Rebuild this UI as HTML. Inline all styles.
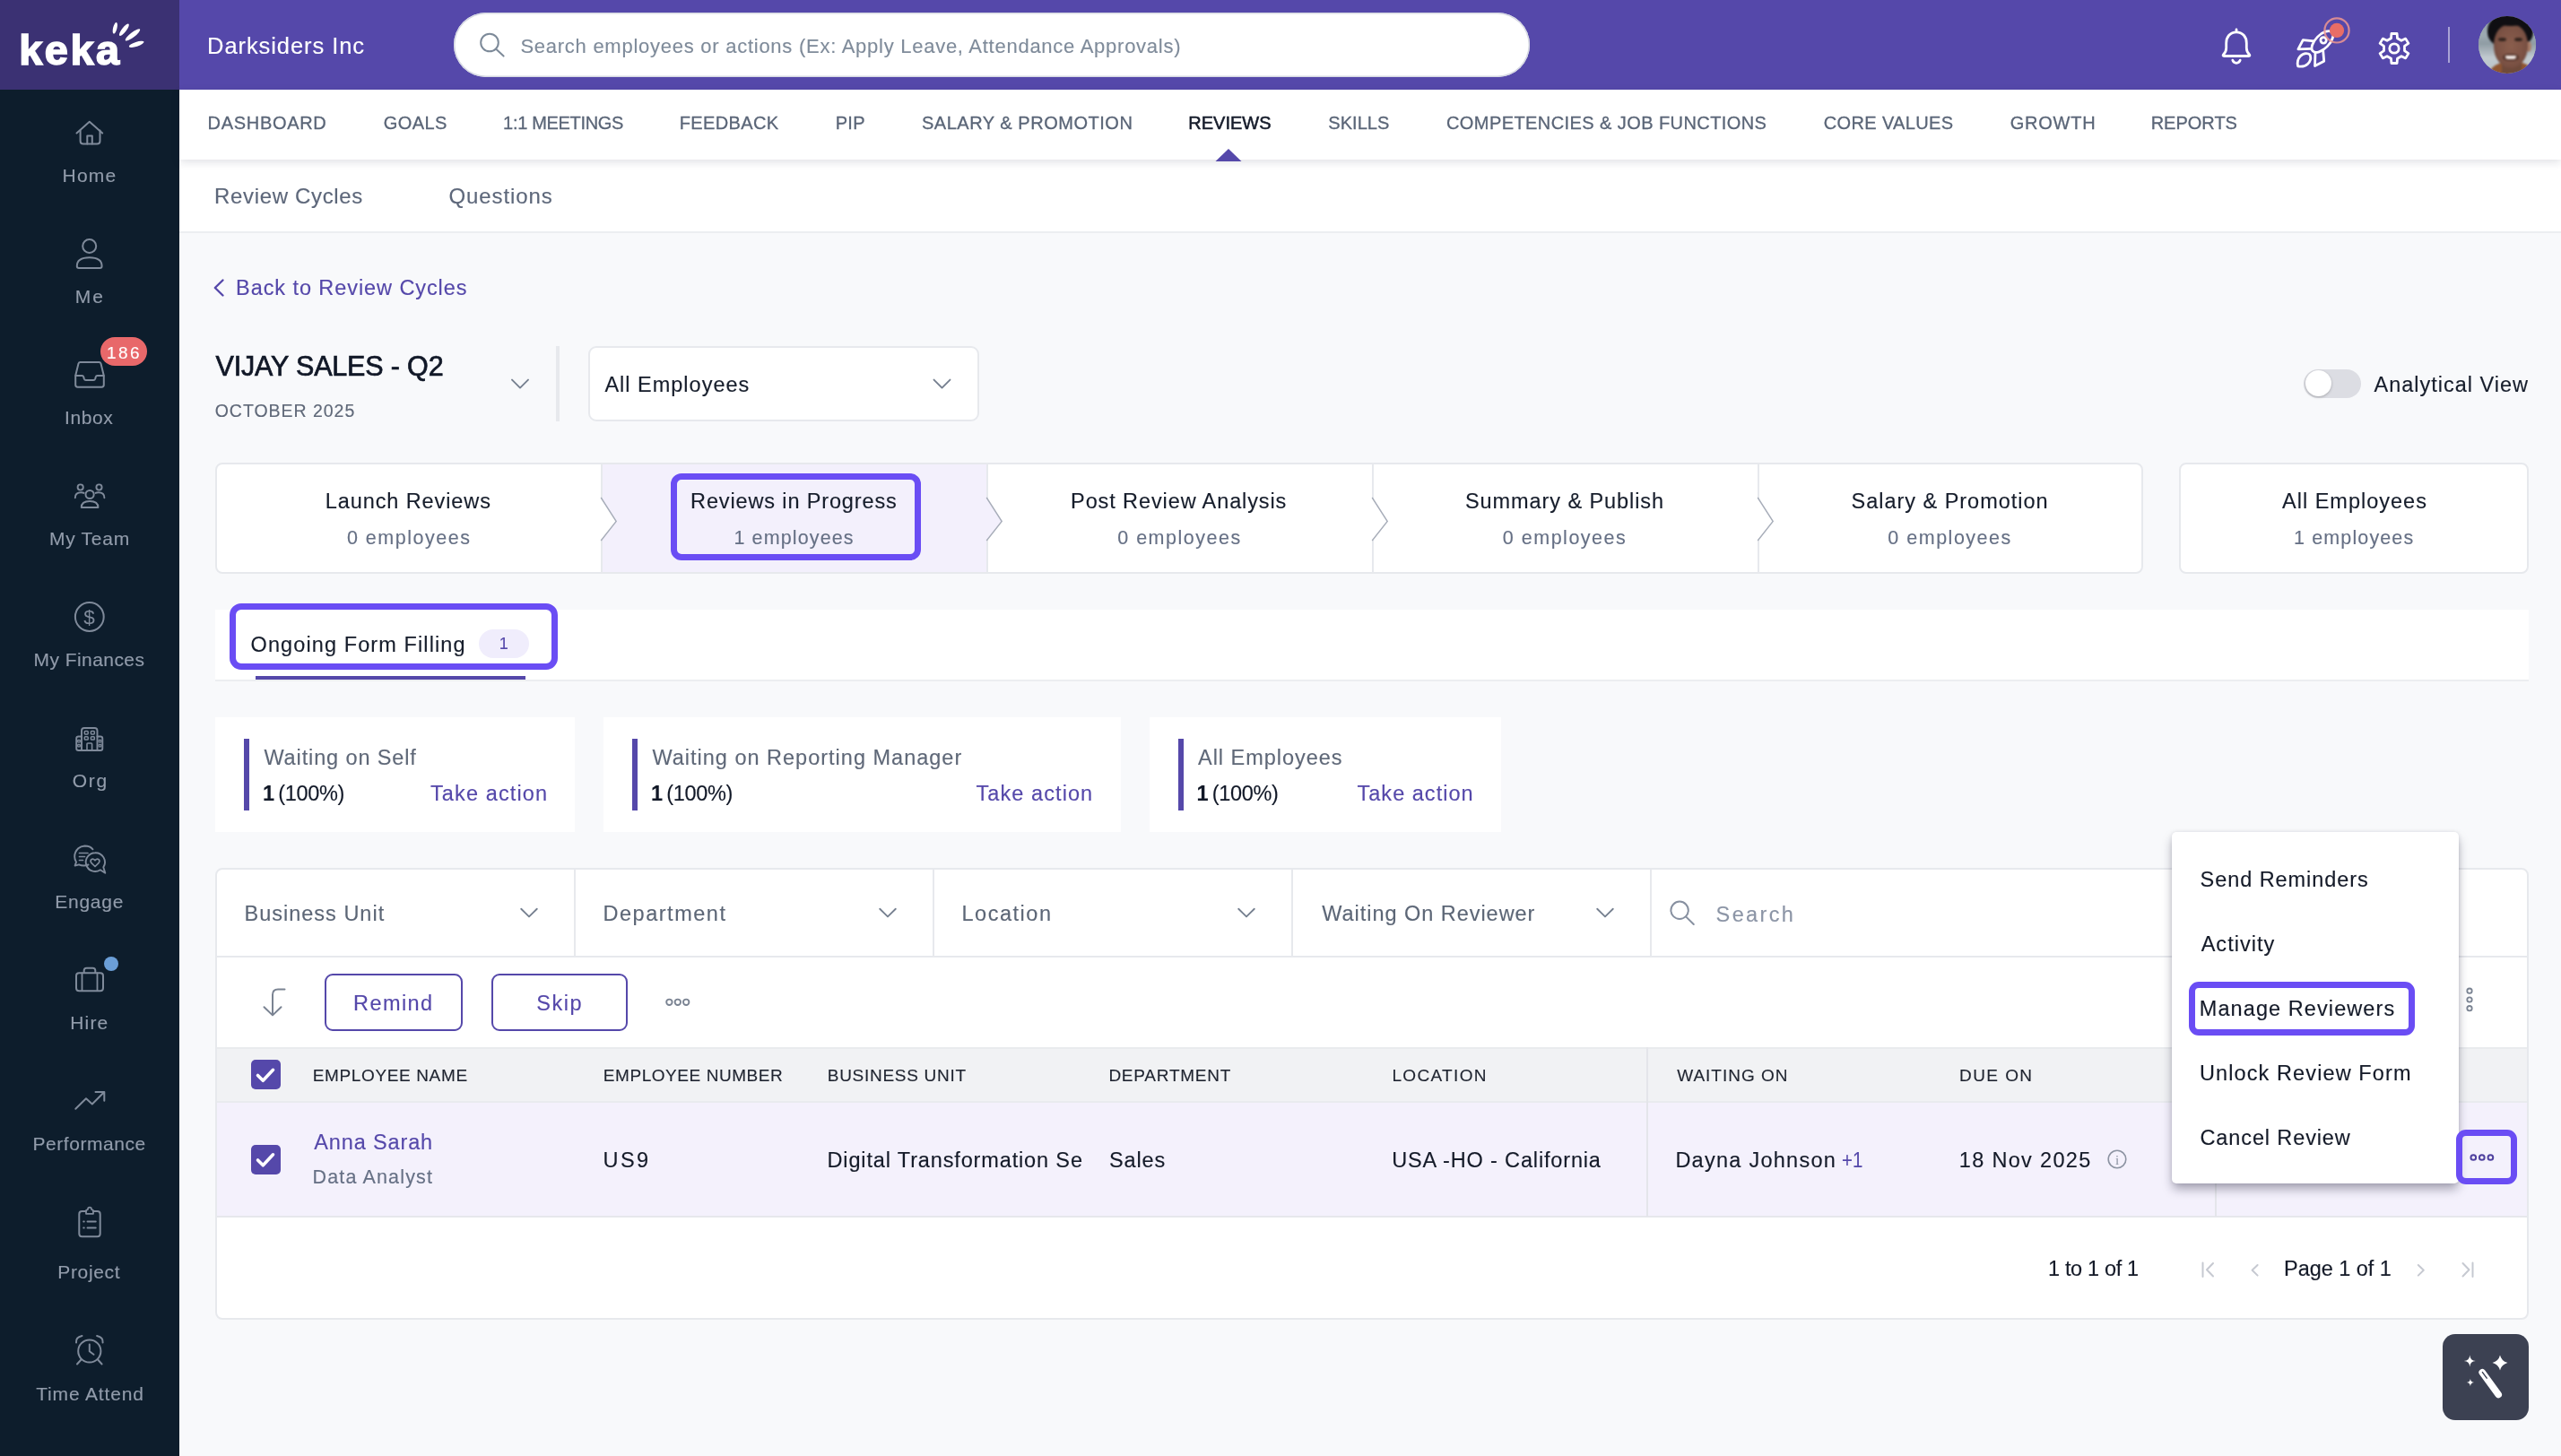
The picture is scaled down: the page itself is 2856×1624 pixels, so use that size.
<!DOCTYPE html>
<html lang="en"><head><meta charset="utf-8"><title>Keka - Reviews</title>
<style>
*{margin:0;padding:0}
html,body{width:100%;height:100%;min-width:100%;overflow:hidden;background:#f8f9fb}
body{position:relative;font-family:"Liberation Sans",sans-serif;-webkit-font-smoothing:antialiased}
#p{position:absolute;left:0;top:0;width:2856px;height:1624px;overflow:hidden;will-change:transform;transform-origin:0 0;background:#f8f9fb}
#p div,#p span{position:absolute;display:block}
#p span{white-space:nowrap;-webkit-text-stroke:.14px}
#ic{position:absolute;left:0;top:0;z-index:10;pointer-events:none}
</style></head>
<body>
<div id="p">
<div style="left:200px;top:0px;width:2656px;height:100px;background:#5548aa;"></div>
<div style="left:0px;top:0px;width:200px;height:100px;background:#3b3173;"></div>
<div style="left:0px;top:100px;width:200px;height:1524px;background:#0d1d2c;"></div>
<div style="left:200px;top:100px;width:2656px;height:78px;background:#fff;box-shadow:0 3px 9px rgba(20,30,60,.13);z-index:2;"></div>
<div style="left:200px;top:178px;width:2656px;height:80px;background:#fff;border-bottom:2px solid #eceef1;"></div>
<span style="left:21.3px;top:29px;font-size:47px;line-height:53px;color:#fff;letter-spacing:2.41px;font-weight:700;-webkit-text-stroke:1.6px #fff;z-index:3;">keka</span>
<span style="left:231.1px;top:37px;font-size:25.5px;line-height:28px;color:#fff;letter-spacing:0.92px;">Darksiders Inc</span>
<div style="left:506px;top:14px;width:1200px;height:72px;background:#fff;border-radius:36px;box-shadow:inset 0 0 0 1.5px #d5d8e2;"></div>
<span style="left:580.4px;top:39px;font-size:22px;line-height:25px;color:#7f8b9a;letter-spacing:0.74px;">Search employees or actions (Ex: Apply Leave, Attendance Approvals)</span>
<span style="left:231.6px;top:126px;font-size:20px;line-height:22px;color:#5a6577;letter-spacing:0.69px;z-index:3;-webkit-text-stroke:.3px #5a6577;">DASHBOARD</span>
<span style="left:427.8px;top:126px;font-size:20px;line-height:22px;color:#5a6577;letter-spacing:0.43px;z-index:3;-webkit-text-stroke:.3px #5a6577;">GOALS</span>
<span style="left:561.1px;top:126px;font-size:20px;line-height:22px;color:#5a6577;letter-spacing:-0.32px;z-index:3;-webkit-text-stroke:.3px #5a6577;">1:1 MEETINGS</span>
<span style="left:757.8px;top:126px;font-size:20px;line-height:22px;color:#5a6577;letter-spacing:0.35px;z-index:3;-webkit-text-stroke:.3px #5a6577;">FEEDBACK</span>
<span style="left:931.8px;top:126px;font-size:20px;line-height:22px;color:#5a6577;letter-spacing:0.23px;z-index:3;-webkit-text-stroke:.3px #5a6577;">PIP</span>
<span style="left:1027.9px;top:126px;font-size:20px;line-height:22px;color:#5a6577;letter-spacing:0.53px;z-index:3;-webkit-text-stroke:.3px #5a6577;">SALARY &amp; PROMOTION</span>
<span style="left:1325.3px;top:126px;font-size:20px;line-height:22px;color:#161c2b;z-index:3;-webkit-text-stroke:.55px #161c2b;">REVIEWS</span>
<span style="left:1481.3px;top:126px;font-size:20px;line-height:22px;color:#5a6577;letter-spacing:0.04px;z-index:3;-webkit-text-stroke:.3px #5a6577;">SKILLS</span>
<span style="left:1613px;top:126px;font-size:20px;line-height:22px;color:#5a6577;letter-spacing:0.42px;z-index:3;-webkit-text-stroke:.3px #5a6577;">COMPETENCIES &amp; JOB FUNCTIONS</span>
<span style="left:2033.7px;top:126px;font-size:20px;line-height:22px;color:#5a6577;letter-spacing:0.37px;z-index:3;-webkit-text-stroke:.3px #5a6577;">CORE VALUES</span>
<span style="left:2241.8px;top:126px;font-size:20px;line-height:22px;color:#5a6577;letter-spacing:0.75px;z-index:3;-webkit-text-stroke:.3px #5a6577;">GROWTH</span>
<span style="left:2398.7px;top:126px;font-size:20px;line-height:22px;color:#5a6577;letter-spacing:-0.01px;z-index:3;-webkit-text-stroke:.3px #5a6577;">REPORTS</span>
<span style="left:239px;top:205px;font-size:24px;line-height:27px;color:#5d677a;letter-spacing:0.66px;">Review Cycles</span>
<span style="left:500.5px;top:205px;font-size:24px;line-height:27px;color:#5d677a;letter-spacing:0.91px;">Questions</span>
<span style="left:69.5px;top:184px;font-size:21px;line-height:23px;color:#929cab;letter-spacing:1.21px;">Home</span>
<span style="left:83.7px;top:319px;font-size:21px;line-height:23px;color:#929cab;letter-spacing:2.08px;">Me</span>
<span style="left:72px;top:454px;font-size:21px;line-height:23px;color:#929cab;letter-spacing:0.6px;">Inbox</span>
<span style="left:55px;top:589px;font-size:21px;line-height:23px;color:#929cab;letter-spacing:0.72px;">My Team</span>
<span style="left:37.5px;top:724px;font-size:21px;line-height:23px;color:#929cab;letter-spacing:0.44px;">My Finances</span>
<span style="left:80.7px;top:859px;font-size:21px;line-height:23px;color:#929cab;letter-spacing:1.72px;">Org</span>
<span style="left:61.2px;top:994px;font-size:21px;line-height:23px;color:#929cab;letter-spacing:0.77px;">Engage</span>
<span style="left:78.3px;top:1129px;font-size:21px;line-height:23px;color:#929cab;letter-spacing:1.15px;">Hire</span>
<span style="left:36.5px;top:1264px;font-size:21px;line-height:23px;color:#929cab;letter-spacing:0.54px;">Performance</span>
<span style="left:64.3px;top:1407px;font-size:21px;line-height:23px;color:#929cab;letter-spacing:0.65px;">Project</span>
<span style="left:40.2px;top:1543px;font-size:21px;line-height:23px;color:#929cab;letter-spacing:0.85px;">Time Attend</span>
<div style="left:111.8px;top:376px;width:52.2px;height:32px;background:#e8686a;border-radius:16px;"></div>
<span style="left:119px;top:383px;font-size:19px;line-height:21px;color:#fff;letter-spacing:2.49px;">186</span>
<div style="left:116px;top:1066.6px;width:16px;height:16px;background:#6b9fd8;border-radius:50%;"></div>
<span style="left:263.1px;top:308px;font-size:23.5px;line-height:26px;color:#5548aa;letter-spacing:0.92px;">Back to Review Cycles</span>
<span style="left:240.5px;top:391px;font-size:30.5px;line-height:34px;color:#111827;letter-spacing:-0.16px;-webkit-text-stroke:.7px #111827;">VIJAY SALES - Q2</span>
<span style="left:239.7px;top:447px;font-size:19.5px;line-height:22px;color:#5f6878;letter-spacing:0.97px;">OCTOBER 2025</span>
<div style="left:620px;top:386px;width:4px;height:84px;background:#e7e9ed;"></div>
<div style="left:656px;top:386px;width:436px;height:84px;background:#fff;border:2px solid #e7e9ed;border-radius:9px;box-sizing:border-box;"></div>
<span style="left:674.4px;top:416px;font-size:23.5px;line-height:26px;color:#161d2b;letter-spacing:1px;">All Employees</span>
<div style="left:2569px;top:412px;width:64px;height:32px;background:#dcdde3;border-radius:17px;"></div>
<div style="left:2570.5px;top:413.3px;width:29px;height:29px;background:#fff;border-radius:50%;box-shadow:0 1px 3px rgba(0,0,0,.25);"></div>
<span style="left:2647.6px;top:416px;font-size:23.5px;line-height:26px;color:#161d2b;letter-spacing:0.98px;">Analytical View</span>
<div style="left:240px;top:516px;width:2150px;height:124px;background:#fff;border:2px solid #e7e9ed;border-radius:8px;box-sizing:border-box;"></div>
<div style="left:672px;top:518px;width:430px;height:120px;background:#f3f0fc;"></div>
<div style="left:670px;top:518px;width:2px;height:120px;background:#e7e9ed;"></div>
<div style="left:1100px;top:518px;width:2px;height:120px;background:#e7e9ed;"></div>
<div style="left:1530px;top:518px;width:2px;height:120px;background:#e7e9ed;"></div>
<div style="left:1960px;top:518px;width:2px;height:120px;background:#e7e9ed;"></div>
<div style="left:2430px;top:516px;width:390px;height:124px;background:#fff;border:2px solid #e7e9ed;border-radius:8px;box-sizing:border-box;"></div>
<span style="left:362.8px;top:546px;font-size:23.5px;line-height:26px;color:#161d2b;letter-spacing:0.9px;">Launch Reviews</span>
<span style="left:386.9px;top:588px;font-size:21.5px;line-height:24px;color:#667085;letter-spacing:1.51px;">0 employees</span>
<span style="left:770.1px;top:546px;font-size:23.5px;line-height:26px;color:#161d2b;letter-spacing:0.86px;">Reviews in Progress</span>
<span style="left:818.4px;top:588px;font-size:21.5px;line-height:24px;color:#667085;letter-spacing:1.13px;">1 employees</span>
<span style="left:1194.1px;top:546px;font-size:23.5px;line-height:26px;color:#161d2b;letter-spacing:0.89px;">Post Review Analysis</span>
<span style="left:1246.2px;top:588px;font-size:21.5px;line-height:24px;color:#667085;letter-spacing:1.51px;">0 employees</span>
<span style="left:1634px;top:546px;font-size:23.5px;line-height:26px;color:#161d2b;letter-spacing:0.92px;">Summary &amp; Publish</span>
<span style="left:1675.8px;top:588px;font-size:21.5px;line-height:24px;color:#667085;letter-spacing:1.51px;">0 employees</span>
<span style="left:2064.5px;top:546px;font-size:23.5px;line-height:26px;color:#161d2b;letter-spacing:0.98px;">Salary &amp; Promotion</span>
<span style="left:2105.3px;top:588px;font-size:21.5px;line-height:24px;color:#667085;letter-spacing:1.51px;">0 employees</span>
<span style="left:2545px;top:546px;font-size:23.5px;line-height:26px;color:#161d2b;letter-spacing:1px;">All Employees</span>
<span style="left:2558px;top:588px;font-size:21.5px;line-height:24px;color:#667085;letter-spacing:1.13px;">1 employees</span>
<div style="left:747.8px;top:527.5px;width:279.7px;height:97.8px;border:7.5px solid #6a4df4;border-radius:12px;box-sizing:border-box;"></div>
<div style="left:240px;top:680px;width:2580px;height:78px;background:#fff;border-bottom:2px solid #eceef1;"></div>
<div style="left:285px;top:754px;width:301px;height:4px;background:#5548aa;"></div>
<div style="left:256px;top:673px;width:366px;height:73.6px;background:#fff;border:7.5px solid #6a4df4;border-radius:13px;box-sizing:border-box;"></div>
<span style="left:279.5px;top:706px;font-size:23.5px;line-height:26px;color:#161d2b;letter-spacing:1.1px;">Ongoing Form Filling</span>
<div style="left:533.75px;top:702px;width:56.25px;height:31.75px;background:#f0edfc;border-radius:16px;"></div>
<span style="left:556.7px;top:708px;font-size:18px;line-height:20px;color:#5548aa;">1</span>
<div style="left:240px;top:800px;width:401px;height:128px;background:#fff;"></div>
<div style="left:272px;top:824px;width:6px;height:80px;background:#5548aa;"></div>
<span style="left:294.4px;top:832px;font-size:23.5px;line-height:26px;color:#5f6878;letter-spacing:0.88px;">Waiting on Self</span>
<span style="left:293px;top:872px;font-size:23.5px;line-height:26px;color:#111827;font-weight:700;">1</span>
<span style="left:310.2px;top:872px;font-size:23.5px;line-height:26px;color:#111827;letter-spacing:-0.33px;">(100%)</span>
<span style="left:480px;top:872px;font-size:23.5px;line-height:26px;color:#5548aa;letter-spacing:1.12px;">Take action</span>
<div style="left:673px;top:800px;width:577px;height:128px;background:#fff;"></div>
<div style="left:705px;top:824px;width:6px;height:80px;background:#5548aa;"></div>
<span style="left:727.4px;top:832px;font-size:23.5px;line-height:26px;color:#5f6878;letter-spacing:1px;">Waiting on Reporting Manager</span>
<span style="left:726px;top:872px;font-size:23.5px;line-height:26px;color:#111827;font-weight:700;">1</span>
<span style="left:743.2px;top:872px;font-size:23.5px;line-height:26px;color:#111827;letter-spacing:-0.33px;">(100%)</span>
<span style="left:1088.5px;top:872px;font-size:23.5px;line-height:26px;color:#5548aa;letter-spacing:1.08px;">Take action</span>
<div style="left:1282px;top:800px;width:392px;height:128px;background:#fff;"></div>
<div style="left:1314px;top:824px;width:6px;height:80px;background:#5548aa;"></div>
<span style="left:1336px;top:832px;font-size:23.5px;line-height:26px;color:#5f6878;letter-spacing:0.97px;">All Employees</span>
<span style="left:1334.5px;top:872px;font-size:23.5px;line-height:26px;color:#111827;font-weight:700;">1</span>
<span style="left:1351.7px;top:872px;font-size:23.5px;line-height:26px;color:#111827;letter-spacing:-0.33px;">(100%)</span>
<span style="left:1513.5px;top:872px;font-size:23.5px;line-height:26px;color:#5548aa;letter-spacing:1.02px;">Take action</span>
<div style="left:240px;top:968px;width:2580px;height:504px;background:#fff;border:2px solid #e7e9ed;border-radius:8px;box-sizing:border-box;"></div>
<div style="left:242px;top:1066px;width:2576px;height:2px;background:#e7e9ed;"></div>
<div style="left:640px;top:970px;width:2px;height:96px;background:#e7e9ed;"></div>
<div style="left:1040px;top:970px;width:2px;height:96px;background:#e7e9ed;"></div>
<div style="left:1440px;top:970px;width:2px;height:96px;background:#e7e9ed;"></div>
<div style="left:1840px;top:970px;width:2px;height:96px;background:#e7e9ed;"></div>
<span style="left:272.5px;top:1006px;font-size:23.5px;line-height:26px;color:#5c6676;letter-spacing:1px;">Business Unit</span>
<span style="left:672.5px;top:1006px;font-size:23.5px;line-height:26px;color:#5c6676;letter-spacing:1.52px;">Department</span>
<span style="left:1072.5px;top:1006px;font-size:23.5px;line-height:26px;color:#5c6676;letter-spacing:1.52px;">Location</span>
<span style="left:1474.3px;top:1006px;font-size:23.5px;line-height:26px;color:#5c6676;letter-spacing:0.96px;">Waiting On Reviewer</span>
<span style="left:1913.6px;top:1007px;font-size:23.5px;line-height:26px;color:#8c95a6;letter-spacing:2.37px;">Search</span>
<div style="left:362px;top:1086px;width:154px;height:64px;border:2.5px solid #5548aa;border-radius:9px;box-sizing:border-box;background:#fff;"></div>
<div style="left:548px;top:1086px;width:152px;height:64px;border:2.5px solid #5548aa;border-radius:9px;box-sizing:border-box;background:#fff;"></div>
<span style="left:394.1px;top:1106px;font-size:23.5px;line-height:26px;color:#5548aa;letter-spacing:1.41px;">Remind</span>
<span style="left:598.3px;top:1106px;font-size:23.5px;line-height:26px;color:#5548aa;letter-spacing:1.48px;">Skip</span>
<div style="left:240px;top:1168px;width:2580px;height:62px;background:#f1f2f4;border-top:2px solid #e9ebee;border-bottom:2px solid #e9ebee;box-sizing:border-box;"></div>
<div style="left:240px;top:1230px;width:2580px;height:128px;background:#f4f1fc;border-bottom:2px solid #e6e7ec;box-sizing:border-box;"></div>
<div style="left:240px;top:1168px;width:2px;height:190px;background:#e7e9ed;"></div>
<div style="left:2818px;top:1168px;width:2px;height:190px;background:#e7e9ed;"></div>
<div style="left:1836px;top:1168px;width:2px;height:189px;background:#e4e5ea;"></div>
<div style="left:2470px;top:1168px;width:2px;height:189px;background:#e4e5ea;"></div>
<div style="left:280px;top:1182px;width:33px;height:33px;background:#5548aa;border-radius:5px;"></div>
<div style="left:280px;top:1276.5px;width:33px;height:33px;background:#5548aa;border-radius:5px;"></div>
<span style="left:348.7px;top:1189px;font-size:19px;line-height:21px;color:#1f2430;letter-spacing:0.64px;">EMPLOYEE NAME</span>
<span style="left:672.8px;top:1189px;font-size:19px;line-height:21px;color:#1f2430;letter-spacing:0.56px;">EMPLOYEE NUMBER</span>
<span style="left:922.8px;top:1189px;font-size:19px;line-height:21px;color:#1f2430;letter-spacing:0.71px;">BUSINESS UNIT</span>
<span style="left:1236.4px;top:1189px;font-size:19px;line-height:21px;color:#1f2430;letter-spacing:0.76px;">DEPARTMENT</span>
<span style="left:1552.4px;top:1189px;font-size:19px;line-height:21px;color:#1f2430;letter-spacing:1.34px;">LOCATION</span>
<span style="left:1870.2px;top:1189px;font-size:19px;line-height:21px;color:#1f2430;letter-spacing:1px;">WAITING ON</span>
<span style="left:2185px;top:1189px;font-size:19px;line-height:21px;color:#1f2430;letter-spacing:1.44px;">DUE ON</span>
<span style="left:350.3px;top:1261px;font-size:23.5px;line-height:26px;color:#5548aa;letter-spacing:0.86px;">Anna Sarah</span>
<span style="left:348.5px;top:1301px;font-size:21.5px;line-height:24px;color:#667085;letter-spacing:1.16px;">Data Analyst</span>
<span style="left:672.6px;top:1281px;font-size:23.5px;line-height:26px;color:#141a28;letter-spacing:2.36px;">US9</span>
<span style="left:922.5px;top:1281px;font-size:23.5px;line-height:26px;color:#141a28;letter-spacing:0.86px;">Digital Transformation Se</span>
<span style="left:1236.9px;top:1281px;font-size:23.5px;line-height:26px;color:#141a28;letter-spacing:0.88px;">Sales</span>
<span style="left:1552.2px;top:1281px;font-size:23.5px;line-height:26px;color:#141a28;letter-spacing:0.84px;">USA -HO - California</span>
<span style="left:1868.4px;top:1281px;font-size:23.5px;line-height:26px;color:#141a28;letter-spacing:1.26px;">Dayna Johnson</span>
<span style="left:2053.7px;top:1281px;font-size:23.5px;line-height:26px;color:#5548aa;transform:scaleX(0.8694);transform-origin:0 0;">+1</span>
<span style="left:2184.8px;top:1281px;font-size:23.5px;line-height:26px;color:#141a28;letter-spacing:1.32px;">18 Nov 2025</span>
<span style="left:2284px;top:1402px;font-size:23.5px;line-height:26px;color:#141a28;letter-spacing:-0.34px;">1 to 1 of 1</span>
<span style="left:2547px;top:1402px;font-size:23.5px;line-height:26px;color:#141a28;letter-spacing:-0.03px;">Page 1 of 1</span>
<div style="left:2738.6px;top:1260.2px;width:68.9px;height:60.5px;border:7.2px solid #6a4df4;border-radius:11px;box-sizing:border-box;z-index:7;"></div>
<div style="left:2422px;top:928px;width:320px;height:392px;background:#fff;border-radius:5px;box-shadow:0 7px 12px -1px rgba(20,20,45,.36),0 0 4px rgba(20,20,45,.10);z-index:5;"></div>
<span style="left:2453.6px;top:968px;font-size:23.5px;line-height:26px;color:#141a28;letter-spacing:0.93px;z-index:6;">Send Reminders</span>
<span style="left:2454.7px;top:1040px;font-size:23.5px;line-height:26px;color:#141a28;letter-spacing:1.01px;z-index:6;">Activity</span>
<span style="left:2452.8px;top:1112px;font-size:23.5px;line-height:26px;color:#141a28;letter-spacing:1.08px;z-index:6;">Manage Reviewers</span>
<span style="left:2452.9px;top:1184px;font-size:23.5px;line-height:26px;color:#141a28;letter-spacing:1.11px;z-index:6;">Unlock Review Form</span>
<span style="left:2453.5px;top:1256px;font-size:23.5px;line-height:26px;color:#141a28;letter-spacing:0.88px;z-index:6;">Cancel Review</span>
<div style="left:2440.7px;top:1095px;width:252.7px;height:60px;border:7.5px solid #6a4df4;border-radius:11px;box-sizing:border-box;z-index:6;"></div>
<div style="left:2724px;top:1488px;width:96px;height:96px;background:#3c4152;border-radius:14px;"></div>
<div style="left:2764px;top:18px;width:64px;height:64px;border-radius:50%;overflow:hidden;background:#a7b2b8;">
<div style="left:-4px;top:-4px;width:72px;height:72px;filter:blur(1.1px);background:linear-gradient(180deg,#8d9aa2 0%,#9eabb2 35%,#8f9ca4 48%,#c2cbd0 70%,#b4bec4 100%);">
<div style="left:16px;top:54px;width:50px;height:30px;border-radius:50% 50% 0 0;background:#8f5531;"></div>
<div style="left:30px;top:48px;width:22px;height:20px;background:#6e4a3b;"></div>
<div style="left:14px;top:0px;width:51px;height:40px;border-radius:50% 50% 45% 45%;background:#0f0e12;"></div>
<div style="left:57px;top:32px;width:6px;height:12px;border-radius:50%;background:#a87d68;"></div>
<div style="left:21px;top:13px;width:38px;height:49px;border-radius:46% 46% 50% 50%;background:radial-gradient(ellipse at 50% 50%,#8a5e4d 0%,#7d5345 55%,#68453a 100%);"></div>
<div style="left:19px;top:2px;width:42px;height:12.5px;border-radius:50% 50% 60% 60%;background:#0f0e12;"></div>
<div style="left:26px;top:28px;width:9px;height:4px;border-radius:50%;background:#35251f;"></div>
<div style="left:44px;top:28px;width:9px;height:4px;border-radius:50%;background:#35251f;"></div>
<div style="left:31px;top:46px;width:18px;height:8px;border-radius:40%;background:#5a3a31;"></div>
<div style="left:33.5px;top:47.5px;width:12.5px;height:4.5px;border-radius:2px 2px 6px 6px;background:#efe6e2;"></div>
</div></div>
<svg id="ic" width="2856" height="1624" viewBox="0 0 2856 1624">
<path d="M1355.5 180 L1370 166 L1384.5 180 Z" fill="#5548aa"/>
<path d="M669.5 555 L687.2 581.5 L669.5 603 Z" fill="#fff"/>
<path d="M670.2 555 L687.2 581.5 L670.2 603" fill="none" stroke="#a7adb9" stroke-width="1.4" stroke-linejoin="miter"/>
<path d="M1099.5 555 L1117.2 581.5 L1099.5 603 Z" fill="#f3f0fc"/>
<path d="M1100.2 555 L1117.2 581.5 L1100.2 603" fill="none" stroke="#a7adb9" stroke-width="1.4" stroke-linejoin="miter"/>
<path d="M1529.5 555 L1547.2 581.5 L1529.5 603 Z" fill="#fff"/>
<path d="M1530.2 555 L1547.2 581.5 L1530.2 603" fill="none" stroke="#a7adb9" stroke-width="1.4" stroke-linejoin="miter"/>
<path d="M1959.5 555 L1977.2 581.5 L1959.5 603 Z" fill="#fff"/>
<path d="M1960.2 555 L1977.2 581.5 L1960.2 603" fill="none" stroke="#a7adb9" stroke-width="1.4" stroke-linejoin="miter"/>
<path d="M287.5 1199.5 l5.8 5.8 l11.2 -12" fill="none" stroke="#fff" stroke-width="3.6" stroke-linecap="round" stroke-linejoin="round"/>
<path d="M287.5 1294 l5.8 5.8 l11.2 -12" fill="none" stroke="#fff" stroke-width="3.6" stroke-linecap="round" stroke-linejoin="round"/>
<ellipse cx="128.3" cy="31.3" rx="2.2" ry="6.5" fill="#fff" transform="rotate(14 128.3 31.3)"/>
<ellipse cx="138.4" cy="33.3" rx="2.5" ry="8.25" fill="#fff" transform="rotate(38 138.4 33.3)"/>
<ellipse cx="148" cy="38.9" rx="2.7" ry="10.25" fill="#fff" transform="rotate(52 148 38.9)"/>
<ellipse cx="152.2" cy="49.3" rx="2.5" ry="8.75" fill="#fff" transform="rotate(72 152.2 49.3)"/>
<circle cx="546" cy="47.5" r="9.8" fill="none" stroke="#7d8a99" stroke-width="2"/>
<path d="M553.2 54.7 L561.6 62.6" fill="none" stroke="#7d8a99" stroke-width="2" stroke-linecap="round" stroke-linejoin="round" />
<path d="M2494 35.8 c-6.8 0 -11.3 5.3 -11.3 12.2 v5.5 c0 3.2 -1.3 5.6 -3.3 7.6 q-.9 1.4 .8 1.4 h27.6 q1.7 0 .8 -1.4 c-2 -2 -3.3 -4.4 -3.3 -7.6 v-5.5 c0 -6.9 -4.5 -12.2 -11.3 -12.2 z M2494 33 v2.6 M2489.8 67.2 a4.4 4.4 0 0 0 8.4 0" fill="none" stroke="#fff" stroke-width="2.8" stroke-linecap="round" stroke-linejoin="round" />
<g transform="translate(2589.9 46.5) rotate(45)" fill="none" stroke="#fff" stroke-width="2.8" stroke-linejoin="round" stroke-linecap="round"><ellipse cx="0" cy="0" rx="7.6" ry="15"/><circle cx="-0.3" cy="-2" r="3.2"/><path d="M-7 6 L-16.6 14 L-13.2 25 L-3.4 14.6"/><path d="M7 6 L16.6 14 L13.2 25 L3.4 14.6"/><path d="M0 38.6 C-8 33.5 -7.5 24 -1.5 20.6 Q0 19.8 1.5 20.6 C7.5 24 8 33.5 0 38.6 Z"/></g>
<circle cx="2606" cy="33.9" r="8.1" fill="#e96d66" stroke="none" stroke-width="0"/>
<circle cx="2606" cy="33.9" r="13.6" fill="none" stroke="rgba(238,150,145,.85)" stroke-width="2.2"/>
<path d="M2666.5 42.7 L2666.9 37.5 L2673.1 37.5 L2673.5 42.7 L2678 45.3 L2682.7 43.1 L2685.9 48.4 L2681.5 51.4 L2681.5 56.6 L2685.9 59.6 L2682.7 64.9 L2678 62.7 L2673.5 65.3 L2673.1 70.5 L2666.9 70.5 L2666.5 65.3 L2662 62.7 L2657.3 64.9 L2654.1 59.6 L2658.5 56.6 L2658.5 51.4 L2654.1 48.4 L2657.3 43.1 L2662 45.3 Z" fill="none" stroke="#fff" stroke-width="2.8" stroke-linecap="round" stroke-linejoin="round" />
<circle cx="2670" cy="54" r="5.2" fill="none" stroke="#fff" stroke-width="2.8"/>
<rect x="2730" y="30" width="2" height="40" fill="rgba(255,255,255,.5)"/>
<path d="M571 423.6 L580 432.6 L589 423.6" fill="none" stroke="#768090" stroke-width="1.9" stroke-linecap="round" stroke-linejoin="round" />
<path d="M1041.5 423.6 L1050.5 432.6 L1059.5 423.6" fill="none" stroke="#768090" stroke-width="1.9" stroke-linecap="round" stroke-linejoin="round" />
<path d="M581.2 1013.8 L590 1022.4 L598.8 1013.8" fill="none" stroke="#768090" stroke-width="1.9" stroke-linecap="round" stroke-linejoin="round" />
<path d="M981.2 1013.8 L990 1022.4 L998.8 1013.8" fill="none" stroke="#768090" stroke-width="1.9" stroke-linecap="round" stroke-linejoin="round" />
<path d="M1381.2 1013.8 L1390 1022.4 L1398.8 1013.8" fill="none" stroke="#768090" stroke-width="1.9" stroke-linecap="round" stroke-linejoin="round" />
<path d="M1781.2 1013.8 L1790 1022.4 L1798.8 1013.8" fill="none" stroke="#768090" stroke-width="1.9" stroke-linecap="round" stroke-linejoin="round" />
<path d="M248.5 312.5 L239.8 321 L248.5 329.5" fill="none" stroke="#5548aa" stroke-width="2.4" stroke-linecap="round" stroke-linejoin="round" />
<circle cx="1873.1" cy="1015.3" r="9.7" fill="none" stroke="#8790a0" stroke-width="2"/>
<path d="M1880.3 1022.6 L1888.8 1031" fill="none" stroke="#8790a0" stroke-width="2" stroke-linecap="round" stroke-linejoin="round" />
<path d="M317.5 1103.6 H310 Q304 1103.6 304 1109.6 V1132 M294.5 1123.2 L304 1132.4 L313.5 1123.2" fill="none" stroke="#7a8392" stroke-width="2" stroke-linecap="round" stroke-linejoin="round" />
<circle cx="746.4" cy="1117.8" r="3.2" fill="none" stroke="#7a8392" stroke-width="1.9"/>
<circle cx="755.8" cy="1117.8" r="3.2" fill="none" stroke="#7a8392" stroke-width="1.9"/>
<circle cx="765.2" cy="1117.8" r="3.2" fill="none" stroke="#7a8392" stroke-width="1.9"/>
<circle cx="2754" cy="1105.2" r="2.7" fill="none" stroke="#7a8392" stroke-width="1.8"/>
<circle cx="2754" cy="1115" r="2.7" fill="none" stroke="#7a8392" stroke-width="1.8"/>
<circle cx="2754" cy="1124.7" r="2.7" fill="none" stroke="#7a8392" stroke-width="1.8"/>
<circle cx="2758.3" cy="1291" r="2.85" fill="none" stroke="#4f419f" stroke-width="2"/>
<circle cx="2767.8" cy="1291" r="2.85" fill="none" stroke="#4f419f" stroke-width="2"/>
<circle cx="2777.4" cy="1291" r="2.85" fill="none" stroke="#4f419f" stroke-width="2"/>
<circle cx="2361" cy="1293" r="9.8" fill="none" stroke="#8c93a2" stroke-width="1.6"/>
<text x="2361" y="1298.5" font-family="Liberation Serif, serif" font-size="15" text-anchor="middle" fill="#8c93a2">i</text>
<path d="M2456.5 1408.5 V1424 M2468 1409 L2461 1416.3 L2468 1423.5" fill="none" stroke="#c6c9d1" stroke-width="2" stroke-linecap="round" stroke-linejoin="round" />
<path d="M2517.6 1411 L2511.6 1416.8 L2517.6 1422.6" fill="none" stroke="#c6c9d1" stroke-width="2" stroke-linecap="round" stroke-linejoin="round" />
<path d="M2696.8 1411 L2702.8 1416.8 L2696.8 1422.6" fill="none" stroke="#c6c9d1" stroke-width="2" stroke-linecap="round" stroke-linejoin="round" />
<path d="M2746.5 1409 L2753.5 1416.3 L2746.5 1423.5 M2757.5 1408.5 V1424" fill="none" stroke="#c6c9d1" stroke-width="2" stroke-linecap="round" stroke-linejoin="round" />
<path d="M2768.2 1530.8 L2786.2 1555.4" fill="none" stroke="#fff" stroke-width="7.6" stroke-linecap="round" stroke-linejoin="round" />
<path d="M2768.4 1530.6 L2773.2 1537.2" fill="none" stroke="#3c4152" stroke-width="1.4" stroke-linecap="round" stroke-linejoin="round" />
<path d="M2788 1511.5 Q2789.7 1518.3 2796.5 1520 Q2789.7 1521.7 2788 1528.5 Q2786.3 1521.7 2779.5 1520 Q2786.3 1518.3 2788 1511.5 Z" fill="#fff"/>
<path d="M2754.3 1511.5 Q2754.7 1517.6 2760.8 1518 Q2754.7 1518.4 2754.3 1524.5 Q2753.9 1518.4 2747.8 1518 Q2753.9 1517.6 2754.3 1511.5 Z" fill="#fff"/>
<path d="M2754.9 1537.8 Q2755.2 1541.7 2759.1 1542 Q2755.2 1542.3 2754.9 1546.2 Q2754.6 1542.3 2750.7 1542 Q2754.6 1541.7 2754.9 1537.8 Z" fill="#fff"/>
<path d="M85.5 148.5 L99.8 135.8 L114.2 148.5" fill="none" stroke="#7f8a9a" stroke-width="2" stroke-linecap="round" stroke-linejoin="round" />
<path d="M89.6 145.5 V157.3 Q89.6 160.6 92.9 160.6 H108.2 Q111.5 160.6 111.5 157.3 V145.5" fill="none" stroke="#7f8a9a" stroke-width="2" stroke-linecap="round" stroke-linejoin="round" />
<path d="M97.3 160.4 V151.6 H102.8 V160.4" fill="none" stroke="#7f8a9a" stroke-width="2" stroke-linecap="round" stroke-linejoin="round" />
<circle cx="99.7" cy="274.5" r="7.5" fill="none" stroke="#7f8a9a" stroke-width="2"/>
<path d="M85.8 296.8 C85.8 290.3 91.5 287.3 99.7 287.3 C107.9 287.3 113.6 290.3 113.6 296.8 Q113.6 299 111.4 299 H88 Q85.8 299 85.8 296.8 Z" fill="none" stroke="#7f8a9a" stroke-width="2" stroke-linecap="round" stroke-linejoin="round" />
<path d="M89.5 404 H110.5 Q112 404 112.5 405.5 L115.8 419 V429.3 Q115.8 431.7 113.4 431.7 H86.6 Q84.2 431.7 84.2 429.3 V419 L87.5 405.5 Q88 404 89.5 404 Z" fill="none" stroke="#7f8a9a" stroke-width="2" stroke-linecap="round" stroke-linejoin="round" />
<path d="M84.4 419 H91.5 Q92.8 419 93.2 420.3 L93.8 422.5 Q94.3 424 95.8 424 H104.2 Q105.7 424 106.2 422.5 L106.8 420.3 Q107.2 419 108.5 419 H115.6" fill="none" stroke="#7f8a9a" stroke-width="2" stroke-linecap="round" stroke-linejoin="round" />
<circle cx="100.1" cy="551.5" r="4.6" fill="none" stroke="#7f8a9a" stroke-width="2"/>
<path d="M90.8 566 C90.8 561.5 94.5 559 100.1 559 C105.7 559 109.4 561.5 109.4 566 Z" fill="none" stroke="#7f8a9a" stroke-width="2" stroke-linecap="round" stroke-linejoin="round" />
<circle cx="89.7" cy="543.5" r="3.1" fill="none" stroke="#7f8a9a" stroke-width="1.9"/>
<circle cx="110.5" cy="543.5" r="3.1" fill="none" stroke="#7f8a9a" stroke-width="1.9"/>
<path d="M83.8 555.3 C83.8 551.3 86.2 549.3 90.5 549.3 Q92.5 549.3 93.6 549.9" fill="none" stroke="#7f8a9a" stroke-width="1.9" stroke-linecap="round" stroke-linejoin="round" />
<path d="M116.4 555.3 C116.4 551.3 114 549.3 109.7 549.3 Q107.7 549.3 106.6 549.9" fill="none" stroke="#7f8a9a" stroke-width="1.9" stroke-linecap="round" stroke-linejoin="round" />
<circle cx="99.8" cy="688" r="15.9" fill="none" stroke="#7f8a9a" stroke-width="2"/>
<text x="99.6" y="696" font-family="Liberation Sans, sans-serif" font-size="22.5" text-anchor="middle" fill="#7f8a9a">$</text>
<path d="M91 837 V815 Q91 812 94 812 H105.5 Q108.5 812 108.5 815 V837 Z" fill="none" stroke="#7f8a9a" stroke-width="1.9" stroke-linecap="round" stroke-linejoin="round" />
<path d="M91 821.5 H87.5 Q85.2 821.5 85.2 823.8 V834.7 Q85.2 837 87.5 837 H91 M108.5 821.5 H112 Q114.3 821.5 114.3 823.8 V834.7 Q114.3 837 112 837 H108.5" fill="none" stroke="#7f8a9a" stroke-width="1.9" stroke-linecap="round" stroke-linejoin="round" />
<rect x="94.3" y="815.6" width="3.9" height="3.3" rx="0.8" fill="none" stroke="#7f8a9a" stroke-width="1.5"/>
<rect x="101.4" y="815.6" width="3.9" height="3.3" rx="0.8" fill="none" stroke="#7f8a9a" stroke-width="1.5"/>
<rect x="94.3" y="821.8" width="3.9" height="3.3" rx="0.8" fill="none" stroke="#7f8a9a" stroke-width="1.5"/>
<rect x="101.4" y="821.8" width="3.9" height="3.3" rx="0.8" fill="none" stroke="#7f8a9a" stroke-width="1.5"/>
<rect x="97" y="829" width="5.6" height="8" rx="0.8" fill="none" stroke="#7f8a9a" stroke-width="1.6"/>
<rect x="86.7" y="825.5" width="2.6" height="2.4" rx="0.6" fill="none" stroke="#7f8a9a" stroke-width="1.3"/>
<rect x="110.2" y="825.5" width="2.6" height="2.4" rx="0.6" fill="none" stroke="#7f8a9a" stroke-width="1.3"/>
<rect x="86.7" y="830.5" width="2.6" height="2.4" rx="0.6" fill="none" stroke="#7f8a9a" stroke-width="1.3"/>
<rect x="110.2" y="830.5" width="2.6" height="2.4" rx="0.6" fill="none" stroke="#7f8a9a" stroke-width="1.3"/>
<path d="M98.5 964.5 Q96 965.5 93.5 965.5 Q90.5 965.5 88 964.3 L83.6 965.6 L85 961.6 Q83.2 958.8 83.2 955.5 Q83.2 950.2 87.3 946.3 Q90 943.8 94.5 943.5 Q100.5 943.5 103.5 947.3" fill="none" stroke="#7f8a9a" stroke-width="1.9" stroke-linecap="round" stroke-linejoin="round" />
<path d="M88.5 951.5 H98 M88.5 955.5 H94.5 M88.5 959.5 H92.5" fill="none" stroke="#7f8a9a" stroke-width="1.7" stroke-linecap="round" stroke-linejoin="round" />
<path d="M106 951.2 A10.4 10.4 0 1 0 111.8 970.3 L117.3 973.8 L115.3 967.2 A10.4 10.4 0 0 0 106 951.2 Z" fill="none" stroke="#7f8a9a" stroke-width="1.9" stroke-linecap="round" stroke-linejoin="round" />
<path d="M106 966.5 L101.8 962.3 Q100.3 960.3 101.9 958.7 Q103.8 957.2 106 959.6 Q108.2 957.2 110.1 958.7 Q111.7 960.3 110.2 962.3 Z" fill="none" stroke="#7f8a9a" stroke-width="1.7" stroke-linecap="round" stroke-linejoin="round" />
<path d="M88.2 1085.2 H111.8 Q115 1085.2 115 1088.4 V1102 Q115 1105.2 111.8 1105.2 H88.2 Q85 1105.2 85 1102 V1088.4 Q85 1085.2 88.2 1085.2 Z" fill="none" stroke="#7f8a9a" stroke-width="2" stroke-linecap="round" stroke-linejoin="round" />
<path d="M93.7 1085 V1082.6 Q93.7 1079.8 96.5 1079.8 H103.5 Q106.3 1079.8 106.3 1082.6 V1085" fill="none" stroke="#7f8a9a" stroke-width="2" stroke-linecap="round" stroke-linejoin="round" />
<path d="M91.5 1085.5 V1105 M108.5 1085.5 V1105" fill="none" stroke="#7f8a9a" stroke-width="1.8" stroke-linecap="round" stroke-linejoin="round" />
<path d="M84.3 1236.8 L96 1225.3 L102.8 1231.5 L116 1218.3 M106.5 1218 H116.3 V1227.8" fill="none" stroke="#7f8a9a" stroke-width="2" stroke-linecap="round" stroke-linejoin="round" />
<path d="M96 1351 H91.5 Q88.3 1351 88.3 1354.2 V1376 Q88.3 1379.2 91.5 1379.2 H108.5 Q111.7 1379.2 111.7 1376 V1354.2 Q111.7 1351 108.5 1351 H104" fill="none" stroke="#7f8a9a" stroke-width="2" stroke-linecap="round" stroke-linejoin="round" />
<path d="M96 1353.8 V1350.5 Q96 1349.3 97.2 1349.3 H97.8 Q98 1346.7 100 1346.7 Q102 1346.7 102.2 1349.3 H102.8 Q104 1349.3 104 1350.5 V1353.8 Z" fill="none" stroke="#7f8a9a" stroke-width="1.8" stroke-linecap="round" stroke-linejoin="round" />
<path d="M93.2 1362.5 h.6 M97.5 1362.5 H106.8" fill="none" stroke="#7f8a9a" stroke-width="1.9" stroke-linecap="round" stroke-linejoin="round" />
<path d="M93.2 1369.5 h.6 M97.5 1369.5 H106.8" fill="none" stroke="#7f8a9a" stroke-width="1.9" stroke-linecap="round" stroke-linejoin="round" />
<circle cx="99.8" cy="1507" r="12.6" fill="none" stroke="#7f8a9a" stroke-width="2"/>
<path d="M99.8 1499.5 V1507.3 L104.5 1510.8" fill="none" stroke="#7f8a9a" stroke-width="2" stroke-linecap="round" stroke-linejoin="round" />
<path d="M85 1497.5 Q84.3 1491.5 91.5 1490" fill="none" stroke="#7f8a9a" stroke-width="2" stroke-linecap="round" stroke-linejoin="round" />
<path d="M114.6 1497.5 Q115.3 1491.5 108.1 1490" fill="none" stroke="#7f8a9a" stroke-width="2" stroke-linecap="round" stroke-linejoin="round" />
<path d="M90.5 1516.5 L86 1521.5 M109.1 1516.5 L113.6 1521.5" fill="none" stroke="#7f8a9a" stroke-width="2" stroke-linecap="round" stroke-linejoin="round" />
</svg>
</div>
<script>(function(){var w=window.innerWidth||2856;if(Math.abs(w-2856)>2){document.getElementById("p").style.transform="scale("+(w/2856)+")";}})();</script>
</body></html>
